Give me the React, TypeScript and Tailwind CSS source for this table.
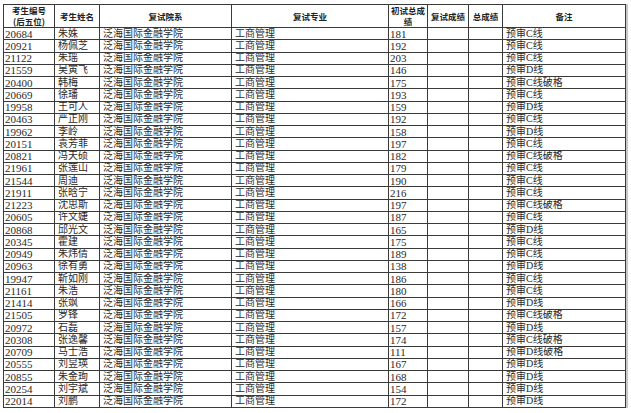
import React from "react";

const rows: [string, string, string, string][] = [
  ["20684", "朱姝", "181", "预审C线"],
  ["20921", "杨佩芝", "192", "预审C线"],
  ["21122", "朱瑶", "203", "预审C线"],
  ["21559", "吴寅飞", "146", "预审D线"],
  ["20400", "韩梅", "175", "预审C线破格"],
  ["20669", "徐璠", "193", "预审C线"],
  ["19958", "王可人", "159", "预审D线"],
  ["20463", "严正刚", "192", "预审C线"],
  ["19962", "李岭", "158", "预审D线"],
  ["20151", "袁芳菲", "197", "预审C线"],
  ["20821", "冯天硕", "182", "预审C线破格"],
  ["21961", "张莲山", "179", "预审C线"],
  ["21544", "周迪", "190", "预审C线"],
  ["21911", "张晗宁", "216", "预审C线"],
  ["21223", "沈思斯", "197", "预审C线破格"],
  ["20605", "许文婕", "187", "预审C线"],
  ["20868", "邱光文", "165", "预审D线"],
  ["20345", "霍建", "175", "预审C线"],
  ["20949", "朱炜倩", "189", "预审C线"],
  ["20963", "徐有勇", "138", "预审D线"],
  ["19947", "靳如刚", "186", "预审C线"],
  ["21161", "朱浩", "180", "预审C线"],
  ["21414", "张飒", "166", "预审D线"],
  ["21505", "罗锋", "172", "预审C线破格"],
  ["20972", "石磊", "157", "预审D线"],
  ["20308", "张逸馨", "174", "预审C线破格"],
  ["20709", "马士浩", "111", "预审D线破格"],
  ["20555", "刘昱瑛", "167", "预审D线"],
  ["20855", "朱金珣", "168", "预审D线"],
  ["20254", "刘宇斌", "154", "预审D线"],
  ["22014", "刘鹏", "172", "预审D线"],
];

const font = { fontFamily: '"Liberation Serif", "Noto Sans CJK SC", serif' };
const headFont = { fontFamily: '"Noto Sans CJK SC", sans-serif' };

const cols = "grid grid-cols-[50px_44px_131px_156px_38px_40px_33px_122px] gap-px";

function H({ children }: { children: React.ReactNode }) {
  return (
    <div
      className="bg-white flex items-center justify-center text-center text-[8.5px] leading-[11px] font-bold text-[#222] overflow-hidden"
      style={headFont}
    >
      {children}
    </div>
  );
}

function C({ children, num }: { children?: React.ReactNode; num?: boolean }) {
  return (
    <div
      className={
        "bg-white flex items-center whitespace-nowrap overflow-hidden leading-[10px] text-[#2a2a2a] " +
        (num ? "text-[11px] pl-[1px]" : "text-[10px] pl-[3px]")
      }
      style={font}
    >
      {children}
    </div>
  );
}

export default function App() {
  return (
    <div className="w-[631px] h-[413px] bg-white overflow-hidden pt-[4px] pl-[3px]">
      <div className="flex flex-col w-fit bg-[#3a3a3a] p-px gap-px shadow-[2px_0_0_0_#c8c8c8]">
        <div className={cols + " h-[22px]"}>
          <H>
            考生编号
            <br />
            (后五位)
          </H>
          <H>考生姓名</H>
          <H>复试院系</H>
          <H>复试专业</H>
          <H>
            初试总成
            <br />绩
          </H>
          <H>复试成绩</H>
          <H>总成绩</H>
          <H>备注</H>
        </div>
        {rows.map((r) => (
          <div key={r[0]} className={cols + " h-[11.26px]"}>
            <C num>{r[0]}</C>
            <C>{r[1]}</C>
            <C>泛海国际金融学院</C>
            <C>工商管理</C>
            <C num>{r[2]}</C>
            <C />
            <C />
            <C>{r[3]}</C>
          </div>
        ))}
      </div>
    </div>
  );
}
